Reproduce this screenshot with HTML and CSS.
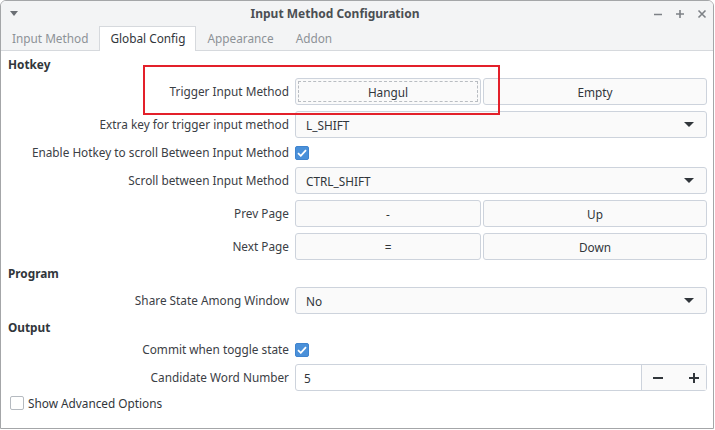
FILE: index.html
```html
<!DOCTYPE html>
<html>
<head>
<meta charset="utf-8">
<link rel="stylesheet" href="styles.css">
</head>
<body>
<div class="window">
  <div class="titlebar">
    <div class="tb-left"><svg width="8" height="5" viewBox="0 0 8 5"><path d="M0 0H8L4 5Z" fill="#6b6f74"/></svg></div>
    <div class="title">Input Method Configuration</div>
    <div class="tb-right">
      <svg width="10" height="10" viewBox="0 0 10 10"><path d="M1 5.5H9" stroke="#7d8186" stroke-width="1.6"/></svg>
      <svg width="10" height="10" viewBox="0 0 10 10"><path d="M1 5H9M5 1V9" stroke="#7d8186" stroke-width="1.6"/></svg>
      <svg width="10" height="10" viewBox="0 0 10 10"><path d="M1.5 1.5L8.5 8.5M8.5 1.5L1.5 8.5" stroke="#7d8186" stroke-width="1.6"/></svg>
    </div>
  </div>
  <div class="tabs">
    <div class="tab">Input Method</div>
    <div class="tab active">Global Config</div>
    <div class="tab">Appearance</div>
    <div class="tab">Addon</div>
  </div>
  <div class="content">
    <div class="form">
      <div class="section">Hotkey</div>
      <div class="label">Trigger Input Method</div>
      <div class="pair"><div class="btn focus"><span>Hangul</span></div><div class="btn">Empty</div></div>

      <div class="label">Extra key for trigger input method</div>
      <div class="combo"><span>L_SHIFT</span><i class="arrow"></i></div>

      <div class="label small">Enable Hotkey to scroll Between Input Method</div>
      <div class="checkcell"><span class="check on"><svg width="10" height="8" viewBox="0 0 10 8"><path d="M1 4.2L3.8 6.8L9 1.2" fill="none" stroke="#fff" stroke-width="1.8"/></svg></span></div>

      <div class="label">Scroll between Input Method</div>
      <div class="combo"><span>CTRL_SHIFT</span><i class="arrow"></i></div>

      <div class="label">Prev Page</div>
      <div class="pair"><div class="btn">-</div><div class="btn">Up</div></div>

      <div class="label">Next Page</div>
      <div class="pair"><div class="btn">=</div><div class="btn">Down</div></div>

      <div class="section">Program</div>
      <div class="label">Share State Among Window</div>
      <div class="combo"><span>No</span><i class="arrow"></i></div>

      <div class="section">Output</div>
      <div class="label small">Commit when toggle state</div>
      <div class="checkcell"><span class="check on"><svg width="10" height="8" viewBox="0 0 10 8"><path d="M1 4.2L3.8 6.8L9 1.2" fill="none" stroke="#fff" stroke-width="1.8"/></svg></span></div>

      <div class="label">Candidate Word Number</div>
      <div class="spin"><span class="spin-val">5</span><div class="spin-btns">
        <svg width="12" height="12" viewBox="0 0 12 12"><path d="M1 6H11" stroke="#31363b" stroke-width="2"/></svg>
        <svg width="12" height="12" viewBox="0 0 12 12"><path d="M1 6H11M6 1V11" stroke="#31363b" stroke-width="2"/></svg>
      </div></div>
    </div>
    <div class="advanced"><span class="check off"></span><span>Show Advanced Options</span></div>
  </div>
  <div class="highlight"></div>
</div>
</body>
</html>
```

FILE: styles.css
```css
html, body {
  margin: 0;
  padding: 0;
  background: #ffffff;
}
body {
  font-family: "Noto Sans", "Open Sans", sans-serif;
  font-size: 11.8px;
  color: #31363b;
}
.window {
  position: relative;
  width: 714px;
  height: 429px;
  box-sizing: border-box;
  border: 1px solid #a4a6a8;
  border-radius: 6px 6px 0 0;
  overflow: hidden;
  background: #ffffff;
}
.titlebar {
  height: 25px;
  background: #f3f4f5;
  display: flex;
  align-items: center;
}
.tb-left {
  width: 26px;
  display: flex;
  justify-content: center;
}
.title {
  flex: 1;
  text-align: center;
  font-weight: bold;
  color: #4b4f53;
  font-size: 12px;
}
.tb-right {
  width: 70px;
  box-sizing: border-box;
  display: flex;
  gap: 12px;
  align-items: center;
  padding-left: 10px;
}
.tabs {
  height: 24px;
  background: #f3f4f5;
  display: flex;
  border-bottom: 1px solid #d6d9dd;
}
.tab {
  padding: 0 11px;
  line-height: 24px;
  color: #8d9297;
}
.tab.active {
  background: #ffffff;
  color: #31363b;
  border: 1px solid #d6d9dd;
  border-bottom: none;
  margin-bottom: -1px;
  height: 24px;
  line-height: 23px;
  padding: 0 10px;
}
.content {
  padding: 6px 6px 0 6px;
}
.form {
  display: grid;
  grid-template-columns: 282px 1fr;
  column-gap: 6px;
  row-gap: 6px;
}
.section {
  grid-column: 1 / -1;
  font-weight: bold;
  height: 15px;
  line-height: 15px;
  color: #31363b;
  padding-left: 1px;
}
.label {
  text-align: right;
  height: 27px;
  line-height: 27px;
  color: #3b4045;
  white-space: nowrap;
}
.label.small {
  height: 17px;
  line-height: 17px;
}
.pair {
  display: grid;
  grid-template-columns: 186px 1fr;
  column-gap: 2px;
  height: 27px;
}
.btn {
  box-sizing: border-box;
  border: 1px solid #cdd3dc;
  border-radius: 3px;
  background: #fafafa;
  display: flex;
  align-items: center;
  justify-content: center;
  color: #31363b;
}
.btn.focus {
  padding: 2px;
}
.btn.focus span {
  flex: 1;
  align-self: stretch;
  display: flex;
  align-items: center;
  justify-content: center;
  border: 1px dashed #b9bdc2;
}
.combo {
  box-sizing: border-box;
  height: 27px;
  border: 1px solid #cdd3dc;
  border-radius: 3px;
  background: #fafafa;
  display: flex;
  align-items: center;
  justify-content: space-between;
  padding: 0 12px 0 10px;
}
.arrow {
  width: 0;
  height: 0;
  border-left: 5px solid transparent;
  border-right: 5px solid transparent;
  border-top: 5px solid #31363b;
}
.checkcell {
  height: 17px;
  display: flex;
  align-items: center;
}
.check {
  box-sizing: border-box;
  width: 14px;
  height: 14px;
  border-radius: 2px;
  display: inline-flex;
  align-items: center;
  justify-content: center;
}
.check.on {
  background: #4a90d9;
  border: 1px solid #3f84cf;
}
.check.off {
  background: #ffffff;
  border: 1px solid #b5bac0;
}
.spin {
  box-sizing: border-box;
  height: 27px;
  border: 1px solid #cdd3dc;
  border-radius: 3px;
  background: #ffffff;
  display: flex;
  align-items: stretch;
}
.spin-val {
  flex: 1;
  display: flex;
  align-items: center;
  padding-left: 8px;
}
.spin-btns {
  width: 65px;
  border-left: 1px solid #cdd3dc;
  background: #fafafa;
  display: flex;
  align-items: center;
  justify-content: space-between;
  padding: 0 6px 0 10px;
  box-sizing: border-box;
}
.advanced {
  margin-top: 3px;
  height: 17px;
  display: flex;
  align-items: center;
  gap: 4px;
  padding-left: 3px;
}
.highlight {
  position: absolute;
  left: 142px;
  top: 64px;
  width: 357px;
  height: 50px;
  box-sizing: border-box;
  border: 2px solid #e3202a;
}
```
